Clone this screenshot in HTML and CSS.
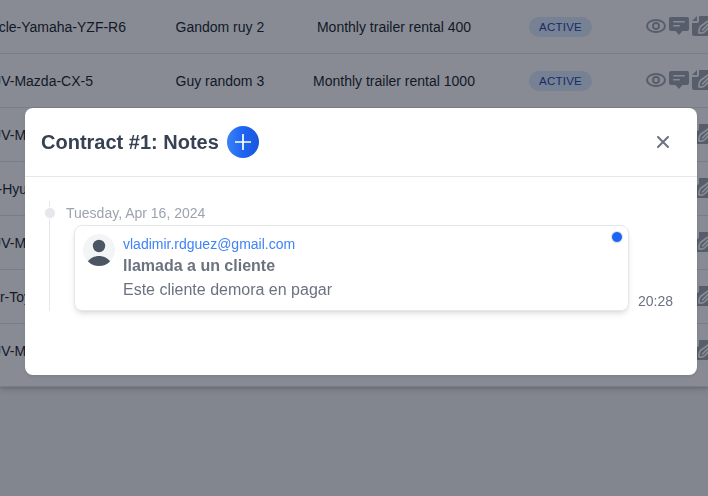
FILE: index.html
```html
<!DOCTYPE html>
<html lang="en">
<head>
<meta charset="utf-8">
<title>Contract notes</title>
<link rel="stylesheet" href="styles.css">
</head>
<body>
<svg class="defs" aria-hidden="true">
  <symbol id="eye" viewBox="0 0 20 14"><g fill="none" stroke="currentColor" stroke-width="2"><path d="M10 10a3 3 0 1 0 0-6 3 3 0 0 0 0 6Z"/><path d="M10 13c4.970 0 9-2.686 9-6s-4.030-6-9-6-9 2.686-9 6 4.030 6 9 6Z"/></g></symbol>
  <symbol id="note" viewBox="0 0 20 20"><path fill="currentColor" fill-rule="evenodd" d="M2 1h16a2 2 0 0 1 2 2v10a2 2 0 0 1-2 2h-4.500L10 19l-3.500-4H2a2 2 0 0 1-2-2V3a2 2 0 0 1 2-2ZM4.800 5a.8.8 0 0 0 0 1.600h10.400a.8.8 0 0 0 0-1.600ZM4.800 9a.8.8 0 0 0 0 1.600h5.400a.8.8 0 0 0 0-1.600Z"/></symbol>
  <symbol id="edit" viewBox="0 0 20 20"><path fill="currentColor" d="M5 0v5H0ZM7 0h13v20H2a2 2 0 0 1-2-2V7h5a2 2 0 0 0 2-2Z"/><path fill="none" stroke="#fff" stroke-width="1.700" stroke-linecap="round" stroke-linejoin="round" d="M18 3.500 8.500 10.500Q6.500 13 7 17q4 .5 6-1.500L21 7M10.500 14l7-7"/></symbol>
</svg>
<main class="table">
  <div class="row"><span class="vehicle">Motorcycle-Yamaha-YZF-R6</span><span class="client">Gandom ruy 2</span><span class="plan">Monthly trailer rental 400</span><span class="badge">ACTIVE</span><span class="actions"><svg class="eye"><use href="#eye"/></svg><svg class="icon"><use href="#note"/></svg><svg class="icon"><use href="#edit"/></svg></span></div>
  <div class="row"><span class="vehicle">SUV-Mazda-CX-5</span><span class="client">Guy random 3</span><span class="plan">Monthly trailer rental 1000</span><span class="badge">ACTIVE</span><span class="actions"><svg class="eye"><use href="#eye"/></svg><svg class="icon"><use href="#note"/></svg><svg class="icon"><use href="#edit"/></svg></span></div>
  <div class="row"><span class="vehicle">SUV-Mazda-CX-5</span><span class="client"></span><span class="plan"></span><span class="badge"></span><span class="actions"><svg class="eye"><use href="#eye"/></svg><svg class="icon"><use href="#note"/></svg><svg class="icon"><use href="#edit"/></svg></span></div>
  <div class="row"><span class="vehicle hyundai">Car-Hyundai</span><span class="client"></span><span class="plan"></span><span class="badge"></span><span class="actions"><svg class="eye"><use href="#eye"/></svg><svg class="icon"><use href="#note"/></svg><svg class="icon"><use href="#edit"/></svg></span></div>
  <div class="row"><span class="vehicle">SUV-Mazda-CX-5</span><span class="client"></span><span class="plan"></span><span class="badge"></span><span class="actions"><svg class="eye"><use href="#eye"/></svg><svg class="icon"><use href="#note"/></svg><svg class="icon"><use href="#edit"/></svg></span></div>
  <div class="row"><span class="vehicle toyota">Car-Toyota</span><span class="client"></span><span class="plan"></span><span class="badge"></span><span class="actions"><svg class="eye"><use href="#eye"/></svg><svg class="icon"><use href="#note"/></svg><svg class="icon"><use href="#edit"/></svg></span></div>
  <div class="row"><span class="vehicle">SUV-Mazda-CX-5</span><span class="client"></span><span class="plan"></span><span class="badge"></span><span class="actions"><svg class="eye"><use href="#eye"/></svg><svg class="icon"><use href="#note"/></svg><svg class="icon"><use href="#edit"/></svg></span></div>
</main>
<div class="overlay">
  <section class="modal" role="dialog">
    <header class="modal-head">
      <h3>Contract #1: Notes</h3>
      <button class="add" aria-label="Add note"><svg width="16" height="16" viewBox="0 0 16 16"><path d="M8 .5v15M.5 8h15" stroke="#fff" stroke-width="1.700" stroke-linecap="round"/></svg></button>
      <button class="close" aria-label="Close"><svg width="12" height="12" viewBox="0 0 12 12"><path d="m1 1 10 10M11 1 1 11" stroke="currentColor" stroke-width="2" stroke-linecap="round"/></svg></button>
    </header>
    <div class="timeline">
      <i class="dot"></i>
      <time class="date">Tuesday, Apr 16, 2024</time>
      <div class="entry">
        <article class="note">
          <svg class="avatar" viewBox="0 0 32 32"><circle cx="16" cy="16" r="16" fill="#f3f4f6"/><circle cx="16" cy="12" r="6.200" fill="#4b5563"/><path d="M5 27.500C7 24.200 11.500 22 16 22s9 2.200 11 5.500C24 30.500 20.200 32 16 32S8 30.500 5 27.500Z" fill="#4b5563"/></svg>
          <div>
            <div class="mail">vladimir.rdguez@gmail.com</div>
            <div class="subject">llamada a un cliente</div>
            <div class="text">Este cliente demora en pagar</div>
          </div>
          <i class="status"></i>
        </article>
        <time class="time">20:28</time>
      </div>
    </div>
  </section>
</div>
</body>
</html>
```
FILE: styles.css
```css
* { box-sizing: border-box; }
body {
  margin: 0;
  height: 496px;
  overflow: hidden;
  background: #f3f4f6;
  font: 14px/20px "Liberation Sans", Arial, sans-serif;
  color: #111827;
}
.defs { position: absolute; width: 0; height: 0; }
svg { display: block; flex: none; }
.table { background: #fff; box-shadow: 0 1px 3px rgba(0, 0, 0, .15), 0 4px 6px rgba(0, 0, 0, .1); }
.row {
  display: grid;
  grid-template-columns: 126px 187px 162px 171px 66px;
  align-items: center;
  width: 712px;
  height: 54px;
  border-bottom: 1px solid #e1e3ef;
}
.row:last-child { height: 63px; padding-bottom: 9px; }
.vehicle { width: max-content; white-space: nowrap; justify-self: end; }
.row:nth-child(n+2) .vehicle { margin-right: 33px; }
.row .vehicle.hyundai { margin-right: 74px; }
.row .vehicle.toyota { margin-right: 77px; }
.row .vehicle.hyundai, .row .vehicle.toyota { justify-self: start; }
.row .vehicle.hyundai { margin-left: -25px; }
.row .vehicle.toyota { margin-left: -18px; }
.client { padding-left: 49.5px; }
.plan { text-align: center; white-space: nowrap; }
.badge {
  margin-left: 54px;
  width: 63px;
  height: 20px;
  border-radius: 10px;
  background: #dbeafe;
  color: #1e40af;
  font-size: 11.5px;
  letter-spacing: .25px;
  line-height: 20px;
  text-align: center;
}
.badge:empty { visibility: hidden; }
.actions { display: flex; gap: 3px; align-items: center; padding-bottom: 2px; color: #9ca3af; }
.eye { width: 20px; height: 14px; }
.icon { width: 20px; height: 20px; }
.overlay {
  position: fixed;
  inset: 0;
  padding: 108px 11px 0 25px;
  background: rgba(17, 24, 39, .5);
}
.modal { height: 267px; background: #fff; border-radius: 8px; box-shadow: 0 1px 3px rgba(0, 0, 0, .1); }
.modal-head { display: flex; align-items: center; height: 69px; padding: 0 16px; border-bottom: 1px solid #e5e7eb; }
h3 { margin: 0; font-size: 20px; line-height: 28px; color: #374151; }
button { display: flex; align-items: center; justify-content: center; padding: 0; border: 0; }
.add { width: 32px; height: 32px; margin-left: 8px; border-radius: 50%; background: linear-gradient(to right, #3b82f6, #1c64f2, #1a56db); }
.close { width: 32px; height: 32px; margin-left: auto; margin-right: 2px; background: none; color: #6b7280; }
.timeline { position: relative; width: 624px; height: 110px; margin: 24px 0 0 24px; padding: 2px 0 0 16px; border-left: 1px solid #e5e7eb; }
.dot { position: absolute; left: -6px; top: 6px; width: 12px; height: 12px; border: 1px solid #fff; border-radius: 50%; background: #e5e7eb; }
.date { display: block; color: #9ca3af; }
.entry { display: flex; align-items: flex-end; padding: 2px 0 0 8px; }
.note { position: relative; display: flex; gap: 8px; width: 555px; height: 86px; padding: 8px; border: 1px solid #e5e7eb; border-radius: 8px; box-shadow: 0 4px 6px -1px rgba(0, 0, 0, .1), 0 2px 4px -2px rgba(0, 0, 0, .1); }
.avatar { width: 32px; height: 32px; }
.mail { color: #3f83f8; }
.subject, .text { font-size: 16px; line-height: 24px; color: #6b7280; }
.subject { font-weight: 700; }
.status { position: absolute; right: 4.5px; top: 4.5px; width: 12px; height: 12px; border: 1px solid #e5e7eb; border-radius: 50%; background: #1c64f2; }
.time { margin-left: 9px; color: #6b7280; }
```
